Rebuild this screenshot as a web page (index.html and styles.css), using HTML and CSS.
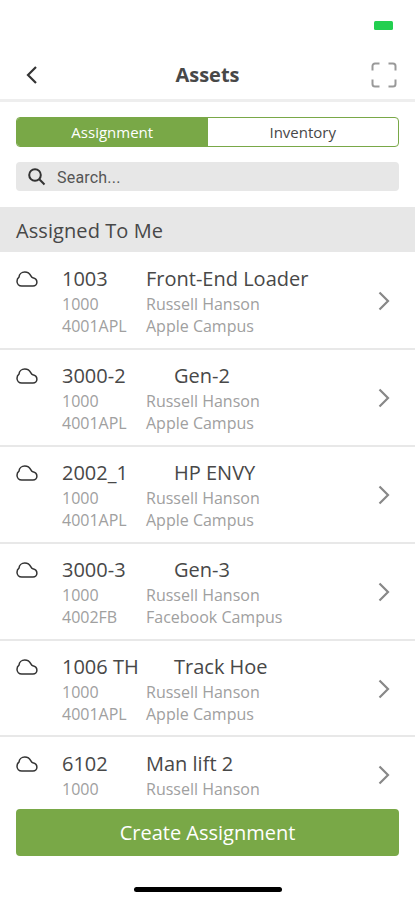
FILE: index.html
```html
<!DOCTYPE html>
<html lang="en">
<head>
<meta charset="utf-8">
<title>Assets</title>
<link rel="stylesheet" href="styles.css">
</head>
<body>
<svg class="defs" aria-hidden="true">
  <symbol id="cloud" viewBox="0 0 22 16"><path d="M5.800 15h11.200c2.200 0 3.900-1.600 3.900-3.700 0-2.200-1.600-4-4.100-4.500-.9-.2-1.400-.8-1.900-1.900C13.700 2.500 11.500 1 8.800 1 5.600 1 3.200 3.200 3 6.100 1.700 7 1 8.500 1 10.200 1 13 3 15 5.800 15z"/></symbol>
  <symbol id="chevron" viewBox="0 0 12 20"><path d="M1.500 1.500 10 10l-8.500 8.500"/></symbol>
</svg>
<div class="screen">
  <div class="status"><span class="battery"></span></div>
  <header class="nav">
    <svg class="back" viewBox="0 0 12 20"><path d="M10 2 2 10l8 8"/></svg>
    <h1>Assets</h1>
    <svg class="scan" viewBox="0 0 26 26"><path d="M1.500 8.500V4A2.500 2.500 0 0 1 4 1.500h4.500M17.500 1.500H22A2.500 2.500 0 0 1 24.500 4v4.500M24.500 17.500V22a2.500 2.500 0 0 1-2.500 2.500h-4.500M8.500 24.500H4A2.500 2.500 0 0 1 1.500 22v-4.500"/></svg>
  </header>
  <div class="tabs"><div class="tab active">Assignment</div><div class="tab">Inventory</div></div>
  <div class="search">
    <svg viewBox="0 0 18 18"><circle cx="7" cy="7" r="5.800"/><path d="m11.300 11.300 5.200 5.200"/></svg>
    <span>Search...</span>
  </div>
  <h2>Assigned To Me</h2>
  <main class="list">
    <div class="row"><svg class="cloud"><use href="#cloud"/></svg><div class="info"><div class="title"><span>1003</span><span>Front-End Loader</span></div><div class="sub"><span>1000</span><span>Russell Hanson</span></div><div class="sub"><span>4001APL</span><span>Apple Campus</span></div></div><svg class="chevron"><use href="#chevron"/></svg></div>
    <div class="row"><svg class="cloud"><use href="#cloud"/></svg><div class="info"><div class="title wide"><span>3000-2</span><span>Gen-2</span></div><div class="sub"><span>1000</span><span>Russell Hanson</span></div><div class="sub"><span>4001APL</span><span>Apple Campus</span></div></div><svg class="chevron"><use href="#chevron"/></svg></div>
    <div class="row"><svg class="cloud"><use href="#cloud"/></svg><div class="info"><div class="title wide"><span>2002_1</span><span>HP ENVY</span></div><div class="sub"><span>1000</span><span>Russell Hanson</span></div><div class="sub"><span>4001APL</span><span>Apple Campus</span></div></div><svg class="chevron"><use href="#chevron"/></svg></div>
    <div class="row"><svg class="cloud"><use href="#cloud"/></svg><div class="info"><div class="title wide"><span>3000-3</span><span>Gen-3</span></div><div class="sub"><span>1000</span><span>Russell Hanson</span></div><div class="sub"><span>4002FB</span><span>Facebook Campus</span></div></div><svg class="chevron"><use href="#chevron"/></svg></div>
    <div class="row"><svg class="cloud"><use href="#cloud"/></svg><div class="info"><div class="title wide"><span>1006 TH</span><span>Track Hoe</span></div><div class="sub"><span>1000</span><span>Russell Hanson</span></div><div class="sub"><span>4001APL</span><span>Apple Campus</span></div></div><svg class="chevron"><use href="#chevron"/></svg></div>
    <div class="row short"><svg class="cloud"><use href="#cloud"/></svg><div class="info"><div class="title"><span>6102</span><span>Man lift 2</span></div><div class="sub"><span>1000</span><span>Russell Hanson</span></div></div><svg class="chevron"><use href="#chevron"/></svg></div>
  </main>
  <button class="create">Create Assignment</button>
  <div class="home"></div>
</div>
</body>
</html>
```

FILE: styles.css
```css
* { box-sizing: border-box; }
body { margin: 0; background: #fff; font-family: "Open Sans", sans-serif; color: #484848; }
svg { fill: none; stroke: #333; flex: none; }
.defs { display: none; }
.screen { width: 415px; height: 900px; overflow: hidden; display: flex; flex-direction: column; }
.status { height: 50px; padding: 21px 22px 0 0; display: flex; justify-content: flex-end; flex: none; }
.battery { width: 19px; height: 9px; border-radius: 1.5px; background: #23cf50; }
.nav { height: 52px; flex: none; display: flex; align-items: center; justify-content: space-between; padding: 0 18px 0 26px; border-bottom: 3px solid #eee; }
.back { width: 12px; height: 20px; stroke-width: 2.2; }
.nav h1 { margin: 0 0 0 6px; font-size: 20px; line-height: 28px; font-weight: 700; }
.scan { width: 26px; height: 26px; stroke: #999; stroke-width: 2; }
.tabs { height: 30px; margin: 15px 16px 0; flex: none; display: flex; border: 1px solid #79a847; border-radius: 4px; overflow: hidden; }
.tab { flex: 1; text-align: center; font-size: 15px; line-height: 28px; }
.tab.active { background: #79a847; color: #fff; }
.search { height: 29px; margin: 15px 16px 0; padding: 0 12px; flex: none; display: flex; align-items: center; gap: 11px; background: #e7e7e7; border-radius: 4px; font-family: Roboto, sans-serif; font-size: 16px; letter-spacing: .2px; line-height: 29px; color: #555; }
.search svg { width: 18px; height: 18px; stroke-width: 2; }
.search span { padding-top: 1px; }
h2 { margin: 16px 0 0; padding: 0 16px; height: 45px; flex: none; background: #e7e7e7; font-size: 20px; font-weight: 400; line-height: 47px; letter-spacing: .08px; }
.list { height: 557px; flex: none; overflow: hidden; }
.row { height: 96.9px; display: flex; padding: 13px 25px 0 16px; border-bottom: 2px solid #e8e8e8; }
.row:first-child { height: 97.9px; }
.cloud { width: 22px; height: 16px; margin-top: 6px; stroke-width: 1.500; }
.info { flex: 1; padding-left: 24px; }
.title, .sub { display: grid; grid-template-columns: 84px 1fr; white-space: pre; }
.title { font-size: 20px; line-height: 28px; }
.title.wide { grid-template-columns: 112px 1fr; }
.row:not(:first-child) { padding-top: 12.3px; }
.sub { font-size: 16px; line-height: 22.2px; color: #a0a0a0; }
.chevron { width: 12px; height: 20px; margin-top: 26px; stroke: #888; stroke-width: 2.2; }
.row.short { height: 74px; border: 0; }
.short .chevron { margin-top: 15px; }
.create { height: 47px; margin: 0 16px; flex: none; border: 0; border-radius: 4px; background: #79a847; color: #fff; font: 400 20px/46px "Open Sans", sans-serif; }
.home { width: 148px; height: 5px; margin: 31px 0 0 134px; flex: none; border-radius: 3px; background: #000; }
```
